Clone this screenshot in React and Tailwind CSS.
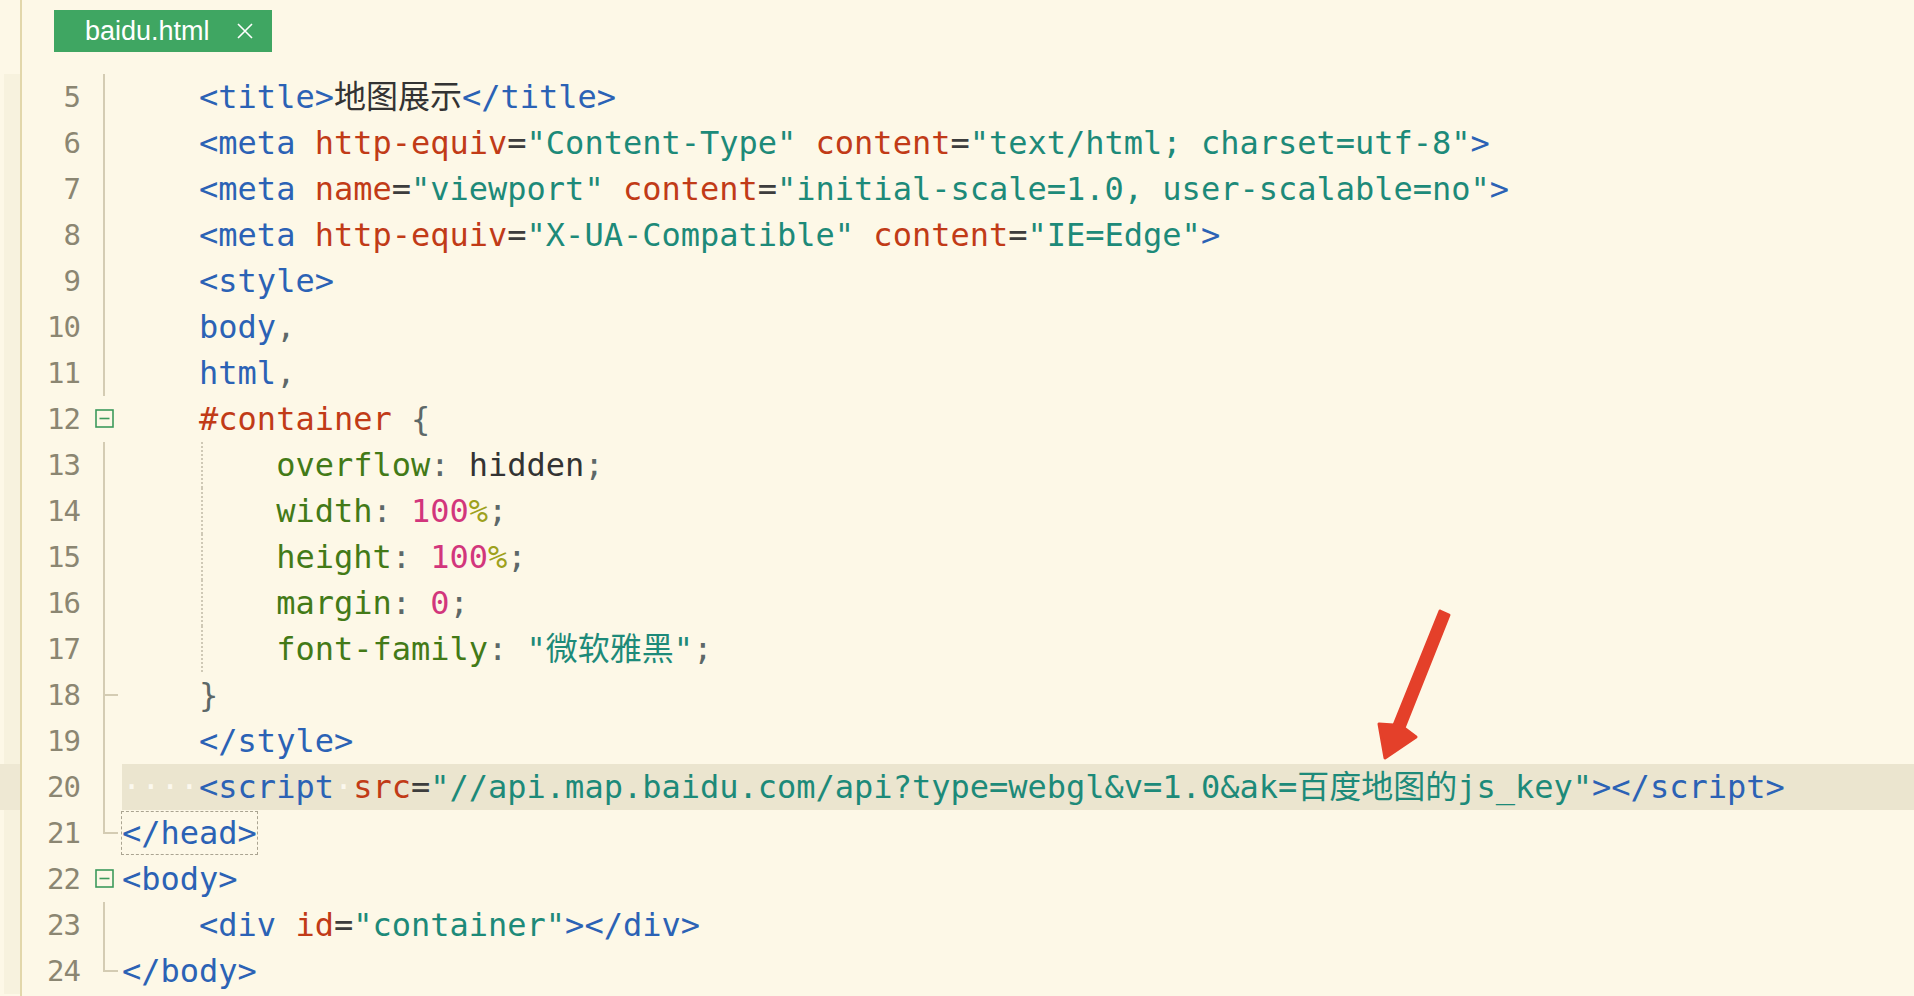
import React from 'react'

const C = {
  t: 'text-[#2b62b5]',
  a: 'text-[#c13b17]',
  s: 'text-[#1d8a79]',
  e: 'text-[#3d3d3d]',
  p: 'text-[#5d6868]',
  c: 'text-[#437a17]',
  v: 'text-[#333333]',
  n: 'text-[#d2367c]',
  u: 'text-[#9ea11c]',
  x: 'text-[#333333]',
  d: 'text-[#fbf8ee]',
}

// [lineNo, gutterGlyph, tokens, indentGuide]
const lines = [
  [5, 'v', [['x', '    '], ['t', '<title>'], ['x', '地图展示'], ['t', '</title>']]],
  [6, 'v', [['x', '    '], ['t', '<meta'], ['x', ' '], ['a', 'http-equiv'], ['e', '='], ['s', '"Content-Type"'], ['x', ' '], ['a', 'content'], ['e', '='], ['s', '"text/html; charset=utf-8"'], ['t', '>']]],
  [7, 'v', [['x', '    '], ['t', '<meta'], ['x', ' '], ['a', 'name'], ['e', '='], ['s', '"viewport"'], ['x', ' '], ['a', 'content'], ['e', '='], ['s', '"initial-scale=1.0, user-scalable=no"'], ['t', '>']]],
  [8, 'v', [['x', '    '], ['t', '<meta'], ['x', ' '], ['a', 'http-equiv'], ['e', '='], ['s', '"X-UA-Compatible"'], ['x', ' '], ['a', 'content'], ['e', '='], ['s', '"IE=Edge"'], ['t', '>']]],
  [9, 'v', [['x', '    '], ['t', '<style>']]],
  [10, 'v', [['x', '    '], ['t', 'body'], ['p', ',']]],
  [11, 'v', [['x', '    '], ['t', 'html'], ['p', ',']]],
  [12, 'fold', [['x', '    '], ['a', '#container'], ['p', ' {']]],
  [13, 'v', [['x', '        '], ['c', 'overflow'], ['p', ': '], ['v', 'hidden'], ['p', ';']], true],
  [14, 'v', [['x', '        '], ['c', 'width'], ['p', ': '], ['n', '100'], ['u', '%'], ['p', ';']], true],
  [15, 'v', [['x', '        '], ['c', 'height'], ['p', ': '], ['n', '100'], ['u', '%'], ['p', ';']], true],
  [16, 'v', [['x', '        '], ['c', 'margin'], ['p', ': '], ['n', '0'], ['p', ';']], true],
  [17, 'v', [['x', '        '], ['c', 'font-family'], ['p', ': '], ['s', '"微软雅黑"'], ['p', ';']], true],
  [18, 'tee', [['x', '    '], ['p', '}']]],
  [19, 'v', [['x', '    '], ['t', '</style>']]],
  [20, 'v', [['d', '····'], ['t', '<script'], ['d', '·'], ['a', 'src'], ['e', '='], ['s', '"//api.map.baidu.com/api?type=webgl&v=1.0&ak=百度地图的js_key"'], ['t', '></script>']]],
  [21, 'end', [['box', '</head>']]],
  [22, 'fold', [['t', '<body>']]],
  [23, 'v', [['x', '    '], ['t', '<div'], ['x', ' '], ['a', 'id'], ['e', '='], ['s', '"container"'], ['t', '></div>']]],
  [24, 'end', [['t', '</body>']]],
]

function Gutter({ kind }) {
  const stroke = '#d4ccb3'
  return (
    <svg width="41" height="46" viewBox="0 0 41 46" className="block">
      {kind === 'v' && <line x1="23" y1="0" x2="23" y2="46" stroke={stroke} strokeWidth="2" />}
      {kind === 'tee' && (
        <>
          <line x1="23" y1="0" x2="23" y2="46" stroke={stroke} strokeWidth="2" />
          <line x1="23" y1="23" x2="37" y2="23" stroke={stroke} strokeWidth="2" />
        </>
      )}
      {kind === 'end' && (
        <path d="M23 0 V23 H37" fill="none" stroke={stroke} strokeWidth="2" />
      )}
      {kind === 'fold' && (
        <>
          <rect x="15" y="14" width="17" height="17" fill="none" stroke="#3c9a5c" strokeWidth="1.6" />
          <line x1="18.5" y1="22.5" x2="28.5" y2="22.5" stroke="#3c9a5c" strokeWidth="1.6" />
        </>
      )}
    </svg>
  )
}

function CodeLine({ no, kind, tokens, guide }) {
  const active = no === 20
  return (
    <div className="flex h-[46px]">
      <div className="w-[59px] pr-[1px] text-right text-[29px] leading-[46px] tracking-[-1px] text-[#8b8672]">{no}</div>
      <Gutter kind={kind} />
      <div className={`relative flex-1 whitespace-pre text-[32px] leading-[46px] ${active ? 'bg-[#ebe5cf]' : ''}`}>
        {guide && <span className="absolute left-[79px] top-0 h-full border-l-2 border-dotted border-[#cfc9b6]" />}
        {tokens.map(([k, txt], i) =>
          k === 'box' ? (
            <span key={i} className="py-[2px] text-[#2b62b5] outline outline-1 outline-dashed outline-[#aaa491]">{txt}</span>
          ) : (
            <span key={i} className={C[k]}>{txt}</span>
          )
        )}
      </div>
    </div>
  )
}

export default function App() {
  return (
    <div
      className="relative flex h-[996px] w-[1914px] overflow-hidden bg-[#fdf8e7]"
      style={{ fontFamily: '"DejaVu Sans Mono", "Noto Sans CJK SC", monospace' }}
    >
      {/* left strip */}
      <div className="flex w-[22px] flex-col border-r-2 border-[#e2d7ab]">
        <div className="h-[74px]" />
        {lines.map(([no]) => (
          <div key={no} className={`h-[46px] ${no === 20 ? 'bg-[#eee8d3]' : 'ml-[4px] bg-[#f7f2de]'}`} />
        ))}
      </div>

      <div className="flex flex-1 flex-col">
        {/* tab bar */}
        <div className="h-[74px] pl-[32px] pt-[10px]">
          <div
            className="flex h-[42px] w-[218px] items-center bg-[#3fa662] pl-[31px] text-[27px] text-white"
            style={{ fontFamily: '"Liberation Sans", Arial, sans-serif' }}
          >
            <span className="leading-none">baidu.html</span>
            <svg width="16" height="16" viewBox="0 0 16 16" className="ml-[27px]">
              <path d="M1 1 L15 15 M15 1 L1 15" stroke="#ffffff" strokeWidth="1.6" />
            </svg>
          </div>
        </div>

        {lines.map(([no, kind, tokens, guide]) => (
          <CodeLine key={no} no={no} kind={kind} tokens={tokens} guide={guide} />
        ))}
      </div>

      {/* annotation arrow */}
      <svg className="pointer-events-none absolute left-[1370px] top-[600px]" width="90" height="170" viewBox="1370 600 90 170">
        <path
          d="M1440 611 L1449 615 L1404 728 L1416 737 L1385 758 L1379 724 L1394 725 Z"
          fill="#e4402a"
          stroke="#e4402a"
          strokeWidth="3"
          strokeLinejoin="round"
        />
      </svg>
    </div>
  )
}
